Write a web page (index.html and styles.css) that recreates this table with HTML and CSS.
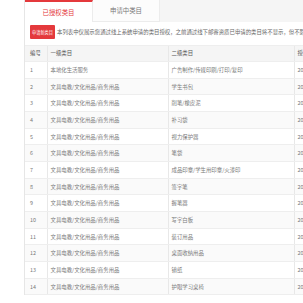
FILE: index.html
```html
<!DOCTYPE html>
<html lang="zh-CN">
<head>
  <meta charset="UTF-8">
  <title>类目管理</title>
  <link rel="stylesheet" href="styles.css">
</head>
<body>
  <div class="page">
    <div class="panel">
      <div class="tabs">
        <div class="tab active">已授权类目</div>
        <div class="tab">申请中类目</div>
      </div>

      <div class="toolbar">
        <a href="#" class="btn-apply">申请新类目</a>
        <span class="notice">本列表中仅展示您通过线上系统申请的类目授权，之前通过线下邮寄资质已申请的类目将不显示，但不影响您的正常使用。</span>
      </div>

      <table class="cat-table">
        <colgroup>
          <col class="c-no">
          <col class="c-first">
          <col class="c-second">
          <col class="c-date">
        </colgroup>
        <thead>
          <tr><th>编号</th><th>一级类目</th><th>二级类目</th><th>授权时间</th></tr>
        </thead>
        <tbody>
          <tr><td>1</td><td>本地化生活服务</td><td>广告制作/传媒印刷/打印/复印</td><td>2016-05-12</td></tr>
          <tr><td>2</td><td>文具电教/文化用品/商务用品</td><td>学生书包</td><td>2016-05-12</td></tr>
          <tr><td>3</td><td>文具电教/文化用品/商务用品</td><td>削笔/橡皮泥</td><td>2016-05-12</td></tr>
          <tr><td>4</td><td>文具电教/文化用品/商务用品</td><td>补习袋</td><td>2016-05-12</td></tr>
          <tr><td>5</td><td>文具电教/文化用品/商务用品</td><td>视力保护器</td><td>2016-05-12</td></tr>
          <tr><td>6</td><td>文具电教/文化用品/商务用品</td><td>笔袋</td><td>2016-05-12</td></tr>
          <tr><td>7</td><td>文具电教/文化用品/商务用品</td><td>成品印章/学生用印章/火漆印</td><td>2016-05-12</td></tr>
          <tr><td>8</td><td>文具电教/文化用品/商务用品</td><td>签字笔</td><td>2016-05-12</td></tr>
          <tr><td>9</td><td>文具电教/文化用品/商务用品</td><td>握笔器</td><td>2016-05-12</td></tr>
          <tr><td>10</td><td>文具电教/文化用品/商务用品</td><td>写字白板</td><td>2016-05-12</td></tr>
          <tr><td>11</td><td>文具电教/文化用品/商务用品</td><td>装订用品</td><td>2016-05-12</td></tr>
          <tr><td>12</td><td>文具电教/文化用品/商务用品</td><td>桌面收纳用品</td><td>2016-05-12</td></tr>
          <tr><td>13</td><td>文具电教/文化用品/商务用品</td><td>镇纸</td><td>2016-05-12</td></tr>
          <tr><td>14</td><td>文具电教/文化用品/商务用品</td><td>护眼学习桌椅</td><td>2016-05-12</td></tr>
        </tbody>
      </table>
    </div>
  </div>
</body>
</html>
```

FILE: styles.css
```css
* {
  box-sizing: border-box;
  margin: 0;
  padding: 0;
}

html, body {
  overflow: hidden;
}

body {
  font-family: "Noto Sans CJK SC", "Noto Sans", sans-serif;
  background: #fff;
  color: #7a7a7a;
  font-size: 5.4px;
}

.page {
  padding-left: 24px;
}

.panel {
  width: 340px;
  border-left: 1px solid #e6e6e6;
}

/* tabs */
.tabs {
  display: flex;
  height: 22px;
  background: #f5f5f5;
}

.tab {
  width: 67px;
  display: flex;
  align-items: center;
  justify-content: center;
  font-size: 6.4px;
  color: #777;
  background: #fcfcfc;
  border-bottom: 1px solid #ececec;
  border-right: 1px solid #ececec;
}

.tab.active {
  width: 68px;
  color: #e4393c;
  background: #fff;
  border-top: 2px solid #e4393c;
  border-bottom: none;
}

/* toolbar */
.toolbar {
  display: flex;
  align-items: center;
  height: 22.5px;
  padding: 0 6px 3.5px 5px;
  white-space: nowrap;
}

.btn-apply {
  display: inline-flex;
  align-items: center;
  justify-content: center;
  width: 25px;
  height: 14px;
  background: #e4393c;
  color: #fff;
  font-size: 4.2px;
  text-decoration: none;
  border-radius: 1px;
}

.notice {
  margin-left: 2px;
  color: #666;
}

/* table */
.cat-table {
  width: 340px;
  border-collapse: collapse;
  table-layout: fixed;
}

.c-no { width: 22px; }
.c-first { width: 121px; }
.c-second { width: 126px; }
.c-date { width: 71px; }

.cat-table th,
.cat-table td {
  height: 16.67px;
  padding: 0 3px;
  text-align: left;
  white-space: nowrap;
  overflow: hidden;
  border-bottom: 1px solid #eee;
  border-left: 1px solid #e8e8e8;
  font-weight: normal;
}

.cat-table th:first-child,
.cat-table td:first-child {
  border-left: none;
  padding-left: 5px;
}

.cat-table th {
  color: #555;
  background: #f5f5f5;
  border-top: 1px solid #eee;
}

.cat-table tbody tr:nth-child(even) td {
  background: #fafafa;
}
```
